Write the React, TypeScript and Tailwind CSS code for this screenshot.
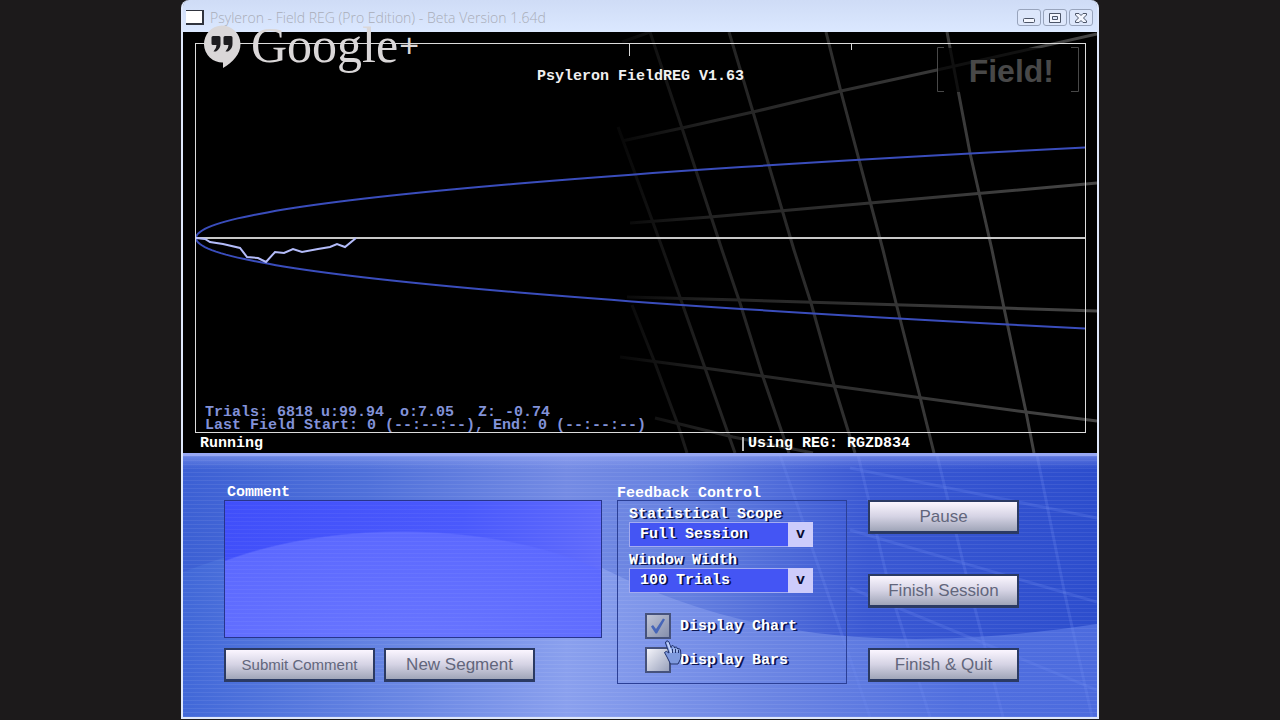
import { useState } from "react";
import type { ReactNode } from "react";

const MONO = "font-['Liberation_Mono',monospace] text-[15px] font-bold";
const SHADOW = "[text-shadow:2px_1px_0_#0b1650]";

const verticals = [
  "618,127 663,250 682,303 735,453",
  "650,32 682,128 722,250 740,303 763,377 789,453",
  "729,32 753,112 794,250 811,303 834,385 855,453",
  "826,32 841,92 883,250 896,303 920,397 934,453",
  "947,32 970,153 992,250 1004,308 1026,412 1034,453",
  "632,305 655,363 678,425 687,453",
];
const horizontals = [
  "622,42 650,32",
  "622,141 682,128 753,112 841,91 937,70 1097,34",
  "630,223 710,217 870,203 1097,183",
  "627,297 740,300 1004,308 1097,311",
  "620,357 704,368 834,386 1026,412 1097,421",
  "655,418 733,437 813,453",
];

function envelope(sign: number) {
  const points: string[] = [];
  for (let i = 0; i <= 60; i++) {
    const t = (i / 60) ** 2;
    points.push(`${(t * 889).toFixed(1)},${(194 + sign * 90.5 * Math.sqrt(t)).toFixed(1)}`);
  }
  return points.join(" ");
}

const walk =
  "0,194 9,195 14,198 27,200 44,204 51,213 62,214 70,218 79,208 88,209 97,205 106,208 122,205 134,203 141,200 149,203 160,194";

function GridBackdrop() {
  return (
    <svg className="absolute inset-0 h-full w-full" viewBox="183 32 914 421" preserveAspectRatio="none" aria-hidden="true">
      <defs>
        <linearGradient id="mesh" gradientUnits="userSpaceOnUse" x1="615" y1="0" x2="1097" y2="0">
          <stop offset="0" stopColor="#060606" />
          <stop offset="0.2" stopColor="#232323" />
          <stop offset="1" stopColor="#464646" />
        </linearGradient>
      </defs>
      {[...verticals, ...horizontals].map((p) => (
        <polyline key={p} points={p} fill="none" stroke="url(#mesh)" strokeWidth="3" />
      ))}
      <rect x="938" y="48" width="140" height="44" fill="#000" fillOpacity="0.72" />
      <path d="M944 47.5H937.5V91.5H944M1071 47.5H1078.5V91.5H1071" fill="none" stroke="#484848" />
    </svg>
  );
}

function Plot() {
  return (
    <svg className="absolute inset-0 h-full w-full" viewBox="0 0 889 388" preserveAspectRatio="none" aria-hidden="true">
      <path d="M433.5 0V12M655.5 0V6" stroke="#d8d8d8" />
      <polyline points={envelope(-1)} fill="none" stroke="#3a4dbc" strokeWidth="2" />
      <polyline points={envelope(1)} fill="none" stroke="#3a4dbc" strokeWidth="2" />
      <path d="M0 194H889" stroke="#c8c8c8" strokeWidth="2" />
      <polyline points={walk} fill="none" stroke="#b4bcfa" strokeWidth="2" />
    </svg>
  );
}

function PanelBackdrop() {
  return (
    <svg className="absolute inset-0 h-full w-full" viewBox="183 453 914 264" preserveAspectRatio="none" aria-hidden="true">
      <defs>
        <linearGradient id="base" x1="0" x2="1" y1="0" y2="0">
          <stop offset="0" stopColor="#3c60d4" />
          <stop offset="0.2" stopColor="#4f70da" />
          <stop offset="0.42" stopColor="#748be4" />
          <stop offset="0.55" stopColor="#6580e0" />
          <stop offset="0.75" stopColor="#3a58d3" />
          <stop offset="1" stopColor="#2c4dcd" />
        </linearGradient>
        <linearGradient id="swell" x1="0" x2="1" y1="0" y2="0">
          <stop offset="0" stopColor="#4168d8" />
          <stop offset="0.25" stopColor="#6b88e4" />
          <stop offset="0.42" stopColor="#8aa0ee" />
          <stop offset="0.65" stopColor="#6a84e3" />
          <stop offset="0.85" stopColor="#506fdf" />
          <stop offset="1" stopColor="#4c6bde" />
        </linearGradient>
        <linearGradient id="top" x1="0" x2="0" y1="0" y2="1">
          <stop offset="0" stopColor="#a8b6fa" />
          <stop offset="1" stopColor="#a8b6fa" stopOpacity="0" />
        </linearGradient>
        <pattern id="scan" width="4" height="4" patternUnits="userSpaceOnUse">
          <rect width="4" height="1" fill="#fff" fillOpacity="0.07" />
        </pattern>
      </defs>
      <rect x="183" y="453" width="914" height="264" fill="url(#base)" />
      <path d="M183 572C320 518 480 520 600 567C720 627 860 660 1097 624V717H183Z" fill="url(#swell)" />
      <g fill="none" stroke="#6c88f0" strokeOpacity="0.25" strokeWidth="3">
        <path d="M858 455L890 590L930 717M937 455L965 570L1003 717M1037 455L1065 595L1092 717" />
        <path d="M850 468L1097 518M850 530L1097 602M850 588L1097 690M780 455L830 600L870 717" />
      </g>
      <rect x="183" y="453" width="914" height="264" fill="url(#scan)" />
      <rect x="183" y="453" width="914" height="16" fill="url(#top)" fillOpacity="0.5" />
      <rect x="183" y="453" width="914" height="3" fill="#98a8f4" />
    </svg>
  );
}

function WindowButton({ label, children }: { label: string; children: ReactNode }) {
  return (
    <button aria-label={label} className="flex h-[17px] w-6 items-center justify-center rounded-[3px] border border-[#98a4bc] bg-[#dde7fb]">
      <svg width="16" height="12" viewBox="0 0 16 12" fill="#f4f7ff" stroke="#4c5568" strokeWidth="1">
        {children}
      </svg>
    </button>
  );
}

function TitleBar() {
  return (
    <header className="flex h-8 items-center justify-between rounded-t-md bg-linear-to-b from-[#cfdcf6] to-[#dbe8ff] pl-[3px] pr-1 pt-[3px]">
      <div className="flex items-center gap-[6px]">
        <span className="h-[15px] w-[18px] border-b-2 border-r-2 border-t border-[#30343e] bg-white" />
        <h1 className="font-['Open_Sans',sans-serif] text-[14px] font-light leading-5 text-[#a9adb8]">
          Psyleron - Field REG (Pro Edition) - Beta Version 1.64d
        </h1>
      </div>
      <div className="flex gap-[2px]">
        <WindowButton label="Minimize">
          <rect x="2.5" y="6.5" width="11" height="4" rx="1" />
        </WindowButton>
        <WindowButton label="Maximize">
          <path d="M2.500 1.500H13.500V10.500H2.500ZM5.500 4.500V7.500H10.500V4.500Z" fillRule="evenodd" />
        </WindowButton>
        <WindowButton label="Close">
          <path d="M2.500 1.500H6L8 3.500L10 1.500H13.500V3L10.500 6L13.500 9V10.500H10L8 8.500L6 10.500H2.500V9L5.500 6L2.500 3Z" />
        </WindowButton>
      </div>
    </header>
  );
}

function Watermark() {
  return (
    <div className="pointer-events-none absolute left-[20px] top-[17px] flex items-center text-[#dad7d8]">
      <svg className="mt-1" width="38" height="44" viewBox="0 0 38 44" aria-hidden="true">
        <path
          d="M19 0.500A18.500 18.500 0 0 1 37.500 19C37.500 29 30 37 20 43V37.500A18.500 18.500 0 1 1 19 0.500Z"
          fill="currentColor"
        />
        <path
          d="M10 11H16Q17.500 11 17.500 12.500V19Q17.500 24 13 26.500H10.500Q13.500 23.500 13.500 20H10Q8.500 20 8.500 18.500V12.500Q8.500 11 10 11ZM22 11H28Q29.500 11 29.500 12.500V19Q29.500 24 25 26.500H22.500Q25.500 23.500 25.500 20H22Q20.500 20 20.500 18.500V12.500Q20.500 11 22 11Z"
          fill="#1d1c1f"
        />
      </svg>
      <span className="ml-[10px] font-['Liberation_Serif',serif] text-[50px] leading-[56px]">Google</span>
      <span className="ml-px font-['Liberation_Sans',sans-serif] text-[34px] leading-8">+</span>
    </div>
  );
}

function Chart() {
  return (
    <section className="relative bg-black">
      <GridBackdrop />
      <div className="relative px-[11px] pt-[11px]">
        <div className="relative ml-px flex h-[390px] flex-col justify-between border border-[#dcdcdc]">
          <Plot />
          <div className="relative">
            <h2 className={`${MONO} mt-[25px] text-center leading-4 text-[#f0f0f0]`}>Psyleron FieldREG V1.63</h2>
            <p className="absolute right-[31px] top-[9px] font-['Liberation_Sans',sans-serif] text-[32px] font-bold leading-9 text-[#484848]">
              Field!
            </p>
          </div>
          <div className={`${MONO} relative pl-[9px] leading-[13px] text-[#8292d8]`}>
            <p className="flex">
              <span>Trials: 6818</span>
              <span className="ml-2">u:99.94</span>
              <span className="ml-4">o:7.05</span>
              <span className="ml-6">Z: -0.74</span>
            </p>
            <p>Last Field Start: 0 (--:--:--), End: 0 (--:--:--)</p>
          </div>
        </div>
      </div>
      <div className={`${MONO} relative grid h-5 grid-cols-[559fr_355fr] items-center pt-px leading-4 text-white`}>
        <span className="pl-[17px]">Running</span>
        <span className="border-l-2 border-[#b8b8b8] pl-1 leading-[14px]">Using REG: RGZD834</span>
      </div>
    </section>
  );
}

function PushButton({ children, small }: { children: ReactNode; small?: boolean }) {
  return (
    <button
      className={`${small ? "text-[15px]" : "text-[17px]"} h-[34px] w-[151px] border-2 border-b-[3px] border-[#2b3a63] bg-linear-to-b from-[#fbf6ff] via-[#d5d3e4] to-[#a0a5b8] pt-px font-['Liberation_Sans',sans-serif] text-[#62667c]`}
    >
      {children}
    </button>
  );
}

function Picker({ id, label, options }: { id: string; label: string; options: string[] }) {
  return (
    <div>
      <label htmlFor={id} className={`${MONO} ${SHADOW} block h-4 leading-[18px] text-white`}>
        {label}
      </label>
      <div className="relative">
        <select
          id={id}
          className={`${MONO} ${SHADOW} block h-[25px] w-full appearance-none border border-[#a4acf0] bg-[#4455f4] pl-[10px] pt-px text-white`}
        >
          {options.map((o) => (
            <option key={o}>{o}</option>
          ))}
        </select>
        <span className={`${MONO} pointer-events-none absolute inset-y-0 right-0 w-[25px] bg-[#cdccfb] text-center leading-[26px] text-[#080c30]`}>
          v
        </span>
      </div>
    </div>
  );
}

function Toggle({ label, initial }: { label: string; initial: boolean }) {
  const [on, setOn] = useState(initial);
  return (
    <label className={`${MONO} ${SHADOW} flex items-center gap-[9px] leading-4 text-white`}>
      <span className="relative h-[26px] w-[26px]">
        <input
          type="checkbox"
          checked={on}
          onChange={() => setOn(!on)}
          className="block h-full w-full appearance-none border-2 border-[#46527c] bg-linear-to-br from-[#f4f4fa] to-[#9aa2bc] checked:from-[#c0c5d6] checked:to-[#868fac]"
        />
        {on && (
          <svg className="pointer-events-none absolute inset-0" width="26" height="26" viewBox="0 0 26 26" aria-hidden="true">
            <path d="M6 13.500L8 12L11 16L18 5.500L20 6.500L12 20.500H10.500Z" fill="#4766b8" />
          </svg>
        )}
      </span>
      <span className="pt-[2px]">{label}</span>
    </label>
  );
}

function Pointer() {
  return (
    <svg className="pointer-events-none absolute left-[46px] top-[139px]" width="18" height="25" viewBox="0 0 18 25" aria-hidden="true">
      <path
        d="M1.500 2Q3 -0.500 5 2L7 8V6.500Q9 4 10.500 7V8Q12 5.500 13.500 8V9Q15.500 7.500 16.500 10L17 16Q17 19 14 24H6.500L3 17L0.500 12.500Q2 10 5 13L1.500 3Z"
        fill="#7f9ade"
        stroke="#22336c"
      />
      <path d="M3.500 2.500L7.500 13" stroke="#c4d4fa" strokeWidth="2" />
      <path d="M8.500 9V13M11.500 9V13M14.500 10V13" stroke="#22336c" />
      <path d="M10 8V12M13 9V12" stroke="#c4d4fa" />
    </svg>
  );
}

function Controls() {
  return (
    <section className="relative flex-1 overflow-hidden">
      <PanelBackdrop />
      <div className="relative flex pb-[33px] pl-[41px] pr-[78px] pt-[31px]">
        <div className="min-w-0 flex-1">
          <label htmlFor="comment" className={`${MONO} block h-4 pl-[3px] leading-[18px] text-white`}>
            Comment
          </label>
          <textarea
            id="comment"
            className="block h-[138px] w-full resize-none border border-[#27348c] bg-[repeating-linear-gradient(#ffffff0c_0_1px,transparent_1px_4px),radial-gradient(ellipse_290px_140px_at_47%_125%,#6b78ff_0%,#5c69ff_99%,transparent_100%),linear-gradient(100deg,#404ffa,#4a59fc_60%,#626dfc)] p-2 text-white"
          />
          <div className="mt-[10px] flex gap-[9px]">
            <PushButton small>Submit Comment</PushButton>
            <PushButton>New Segment</PushButton>
          </div>
        </div>
        <fieldset className="ml-[15px] w-[230px]">
          <legend className={`${MONO} block h-4 leading-[19px] text-white`}>Feedback Control</legend>
          <div className="relative flex h-[184px] flex-col gap-[5px] border border-[#2b3f96] pl-[11px] pr-[33px] pt-[5px]">
            <Picker id="scope" label="Statistical Scope" options={["Full Session", "Segment"]} />
            <Picker id="width" label="Window Width" options={["100 Trials", "200 Trials"]} />
            <div className="mt-[15px] flex flex-col gap-2 whitespace-nowrap pl-4">
              <Toggle label="Display Chart" initial />
              <Toggle label="Display Bars" initial={false} />
            </div>
            <Pointer />
          </div>
        </fieldset>
        <div className="ml-[21px] flex flex-col gap-10 pt-4">
          <PushButton>Pause</PushButton>
          <PushButton>Finish Session</PushButton>
          <PushButton>Finish &amp; Quit</PushButton>
        </div>
      </div>
    </section>
  );
}

export default function App() {
  return (
    <div className="min-h-screen bg-[#1c1a1b] pb-px">
      <main className="relative mx-auto flex min-h-[calc(100vh-1px)] w-full max-w-[918px] flex-col rounded-t-lg border-x-2 border-b-2 border-[#dfe8fb]">
        <TitleBar />
        <Chart />
        <Controls />
        <Watermark />
      </main>
    </div>
  );
}
